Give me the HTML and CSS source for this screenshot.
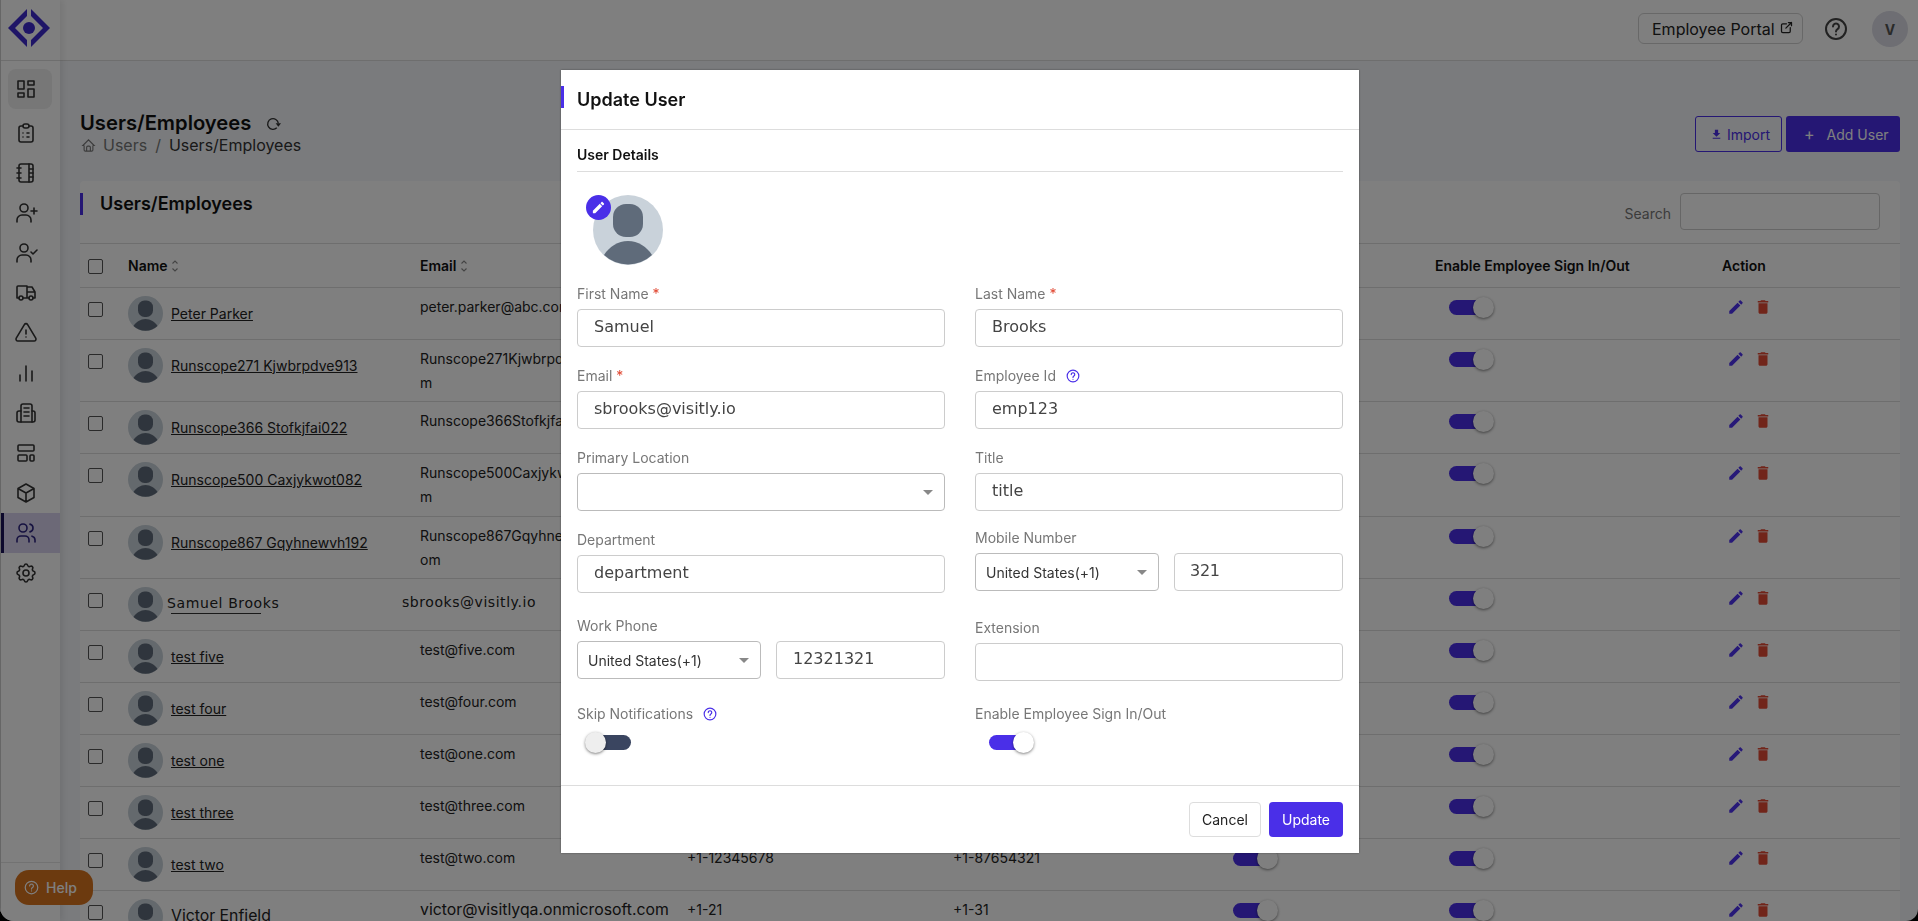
FILE: index.html
```html
<!DOCTYPE html>
<html>
<head>
  <title>Users/Employees</title>
  <link rel="stylesheet" href="styles.css">
</head>
<body>
  <!-- Shared icons -->
  <svg class="icon-defs" xmlns="http://www.w3.org/2000/svg">
    <symbol id="i-avatar" viewBox="0 0 70 70">
      <circle cx="35" cy="35" r="35" fill="#c9d2da"/>
      <rect x="20" y="9" width="30" height="33" rx="13" fill="#5f6b7a"/>
      <path d="M11 60C16 52 25 46 35 46C45 46 54 52 59 60A35 35 0 0 1 11 60Z" fill="#5f6b7a"/>
    </symbol>
    <symbol id="i-edit" viewBox="0 0 24 24">
      <path d="M3 17.25V21h3.75L17.81 9.94l-3.75-3.75L3 17.25zM20.71 7.04c.39-.39.39-1.02 0-1.41l-2.34-2.34c-.39-.39-1.02-.39-1.41 0l-1.83 1.83 3.75 3.75 1.83-1.83z"/>
    </symbol>
    <symbol id="i-trash" viewBox="0 0 24 24">
      <path d="M6 19c0 1.1.9 2 2 2h8c1.1 0 2-.9 2-2V7H6v12zM19 4h-3.5l-1-1h-5l-1 1H5v2h14V4z"/>
    </symbol>
    <symbol id="i-sort" viewBox="0 0 8 14">
      <path d="M1.5 4.5L4 2l2.500 2.500M1.500 9.500L4 12l2.500-2.500" fill="none" stroke="currentColor" stroke-width="1.100"/>
    </symbol>
    <symbol id="i-help" viewBox="0 0 24 24">
      <circle cx="12" cy="12" r="10" fill="none" stroke="currentColor" stroke-width="2"/>
      <path d="M9 9.500a3 3 0 1 1 4.500 2.600c-1 .6-1.500 1.200-1.500 2.400M12 17.500v.01" fill="none" stroke="currentColor" stroke-width="2" stroke-linecap="round"/>
    </symbol>
  </svg>

  <div class="app">
    <aside class="sidebar">
      <div class="logo-box">
        <svg class="logo" viewBox="0 0 42 38" xmlns="http://www.w3.org/2000/svg">
          <path d="M0 19L19 0V7L7 19L19 31V38Z"/>
          <path d="M23 0L42 19L23 38V31L35 19L23 7Z"/>
          <circle cx="21" cy="19" r="6"/>
        </svg>
      </div>
      <nav class="nav">
        <a class="nav-item nav-item-home" href="#">
          <svg class="nav-icon" viewBox="0 0 24 24"><path d="M4 4h6v8h-6zM4 16h6v4h-6zM14 12h6v8h-6zM14 4h6v4h-6z"/></svg>
        </a>
        <a class="nav-item" href="#">
          <svg class="nav-icon" viewBox="0 0 24 24"><path d="M9 5h-2a2 2 0 0 0 -2 2v12a2 2 0 0 0 2 2h10a2 2 0 0 0 2 -2v-12a2 2 0 0 0 -2 -2h-2"/><path d="M9 5a2 2 0 0 1 2 -2h2a2 2 0 0 1 2 2a2 2 0 0 1 -2 2h-2a2 2 0 0 1 -2 -2z"/><path d="M9 12h.01M13 12h2M9 16h.01M13 16h2"/></svg>
        </a>
        <a class="nav-item" href="#">
          <svg class="nav-icon" viewBox="0 0 24 24"><rect x="5" y="3" width="14" height="18" rx="2"/><path d="M15 3v18M3 7h4M3 12h4M3 17h4M15 8h4M15 12h4M15 16h4"/></svg>
        </a>
        <a class="nav-item" href="#">
          <svg class="nav-icon" viewBox="0 0 24 24"><circle cx="10" cy="7" r="4"/><path d="M3 21v-2a5 5 0 0 1 5 -5h4a5 5 0 0 1 5 5v2M20 7v6M17 10h6"/></svg>
        </a>
        <a class="nav-item" href="#">
          <svg class="nav-icon" viewBox="0 0 24 24"><circle cx="10" cy="7" r="4"/><path d="M3 21v-2a5 5 0 0 1 5 -5h4a5 5 0 0 1 5 5v2M17 11l2 2l4 -4"/></svg>
        </a>
        <a class="nav-item" href="#">
          <svg class="nav-icon" viewBox="0 0 24 24"><circle cx="7" cy="17" r="2"/><circle cx="17" cy="17" r="2"/><path d="M5 17h-2v-11a1 1 0 0 1 1 -1h9v12m-4 0h6m4 0h2v-6h-8m0 -5h5l3 5"/></svg>
        </a>
        <a class="nav-item" href="#">
          <svg class="nav-icon" viewBox="0 0 24 24"><path d="M12 9v4M12 16h.01"/><path d="M10.363 3.591l-8.106 13.534a1.914 1.914 0 0 0 1.636 2.871h16.214a1.914 1.914 0 0 0 1.636 -2.87l-8.106 -13.536a1.914 1.914 0 0 0 -3.274 0z"/></svg>
        </a>
        <a class="nav-item" href="#">
          <svg class="nav-icon" viewBox="0 0 24 24"><path d="M6 20v-6M12 20V5M18 20v-10"/></svg>
        </a>
        <a class="nav-item" href="#">
          <svg class="nav-icon" viewBox="0 0 24 24"><path d="M7 10H5a2 2 0 0 0 -2 2v7a2 2 0 0 0 2 2h14a2 2 0 0 0 2 -2v-7a2 2 0 0 0 -2 -2h-1"/><path d="M7 21V5a2 2 0 0 1 2 -2h7a2 2 0 0 1 2 2v16"/><path d="M10 7h5M10 11h5M10 15h5"/></svg>
        </a>
        <a class="nav-item" href="#">
          <svg class="nav-icon" viewBox="0 0 24 24"><rect x="4" y="4" width="16" height="6" rx="1"/><rect x="4" y="14" width="9" height="6" rx="1"/><rect x="16" y="14" width="4" height="6" rx="1"/></svg>
        </a>
        <a class="nav-item" href="#">
          <svg class="nav-icon" viewBox="0 0 24 24"><path d="M12 3l8 4.500v9l-8 4.500l-8 -4.500v-9zM12 12l8 -4.500M12 12v9M12 12l-8 -4.500"/></svg>
        </a>
        <a class="nav-item nav-item-active" href="#">
          <svg class="nav-icon" viewBox="0 0 24 24"><circle cx="9" cy="7" r="4"/><path d="M3 21v-2a4 4 0 0 1 4 -4h4a4 4 0 0 1 4 4v2M16 3.130a4 4 0 0 1 0 7.750M21 21v-2a4 4 0 0 0 -3 -3.850"/></svg>
        </a>
        <a class="nav-item" href="#">
          <svg class="nav-icon" viewBox="0 0 24 24"><path d="M10.325 4.317c.426 -1.756 2.924 -1.756 3.350 0a1.724 1.724 0 0 0 2.573 1.066c1.543 -.94 3.310 .826 2.370 2.370a1.724 1.724 0 0 0 1.065 2.572c1.756 .426 1.756 2.924 0 3.350a1.724 1.724 0 0 0 -1.066 2.573c.94 1.543 -.826 3.310 -2.370 2.370a1.724 1.724 0 0 0 -2.572 1.065c-.426 1.756 -2.924 1.756 -3.350 0a1.724 1.724 0 0 0 -2.573 -1.066c-1.543 .94 -3.310 -.826 -2.370 -2.370a1.724 1.724 0 0 0 -1.065 -2.572c-1.756 -.426 -1.756 -2.924 0 -3.350a1.724 1.724 0 0 0 1.066 -2.573c-.94 -1.543 .826 -3.310 2.370 -2.370c1 .608 2.296 .07 2.572 -1.065z"/><circle cx="12" cy="12" r="3"/></svg>
        </a>
      </nav>
      <div class="sidebar-foot"></div>
    </aside>

    <div class="main">
      <header class="topbar">
        <a class="portal-button" href="#">
          Employee Portal
          <svg class="portal-icon" viewBox="0 0 24 24"><path d="M12 6H6a2 2 0 0 0 -2 2v10a2 2 0 0 0 2 2h10a2 2 0 0 0 2 -2v-6M11 13l9 -9M15 4h5v5"/></svg>
        </a>
        <svg class="top-help"><use href="#i-help"/></svg>
        <div class="user-badge">V</div>
      </header>

      <div class="content">
        <div class="page-head">
          <div>
            <h1 class="page-title">
              Users/Employees
              <svg class="refresh-icon" viewBox="0 0 24 24"><path d="M20 11a8 8 0 1 0 -2.300 6.700"/><path d="M16 11h8l-4 5z" class="refresh-tip"/></svg>
            </h1>
            <div class="breadcrumb">
              <svg class="home-icon" viewBox="0 0 24 24"><path d="M5 12H3l9 -9l9 9h-2M5 12v7a2 2 0 0 0 2 2h10a2 2 0 0 0 2 -2v-7M9 21v-6a2 2 0 0 1 2 -2h2a2 2 0 0 1 2 2v6"/></svg>
              <span class="crumb-muted">Users</span>
              <span class="crumb-sep">/</span>
              <span>Users/Employees</span>
            </div>
          </div>
          <div class="page-actions">
            <button class="button button-outline">
              <svg class="button-icon" viewBox="0 0 24 24"><path d="M5 20h14v-2H5v2zM19 9h-4V3H9v6H5l7 7 7-7z"/></svg>
              Import
            </button>
            <button class="button button-solid">
              <span class="plus">+</span>
              Add User
            </button>
          </div>
        </div>

        <section class="card">
          <div class="card-head">
            <h2 class="card-title">Users/Employees</h2>
            <label class="search">
              <span class="search-label">Search</span>
              <input class="search-input" type="text">
            </label>
          </div>

          <table class="users">
            <colgroup>
              <col class="col-check"><col class="col-name"><col class="col-email"><col class="col-phone"><col class="col-phone">
              <col class="col-skip"><col class="col-sign"><col class="col-action">
            </colgroup>
            <thead>
              <tr>
                <th class="cell-check"><input class="check check-head" type="checkbox"></th>
                <th>Name <svg class="sort"><use href="#i-sort"/></svg></th>
                <th>Email <svg class="sort"><use href="#i-sort"/></svg></th>
                <th></th>
                <th></th>
                <th></th>
                <th>Enable Employee Sign In/Out</th>
                <th>Action</th>
              </tr>
            </thead>
            <tbody>
              <tr>
                <td class="cell-check"><input class="check" type="checkbox"></td>
                <td><div class="user"><svg class="avatar"><use href="#i-avatar"/></svg><a class="user-link" href="#">Peter Parker</a></div></td>
                <td class="cell-text">peter.parker@abc.com</td>
                <td class="cell-text"></td>
                <td class="cell-text"></td>
                <td><div class="toggle"><span class="track"></span><span class="thumb"></span></div></td>
                <td><div class="toggle"><span class="track"></span><span class="thumb"></span></div></td>
                <td><div class="actions"><svg class="act act-edit"><use href="#i-edit"/></svg><svg class="act act-del"><use href="#i-trash"/></svg></div></td>
              </tr>
              <tr class="row-tall">
                <td class="cell-check"><input class="check" type="checkbox"></td>
                <td><div class="user"><svg class="avatar"><use href="#i-avatar"/></svg><a class="user-link" href="#">Runscope271 Kjwbrpdve913</a></div></td>
                <td class="cell-text">Runscope271Kjwbrpdve913@abc.co<br>m</td>
                <td class="cell-text"></td>
                <td class="cell-text"></td>
                <td><div class="toggle"><span class="track"></span><span class="thumb"></span></div></td>
                <td><div class="toggle"><span class="track"></span><span class="thumb"></span></div></td>
                <td><div class="actions"><svg class="act act-edit"><use href="#i-edit"/></svg><svg class="act act-del"><use href="#i-trash"/></svg></div></td>
              </tr>
              <tr>
                <td class="cell-check"><input class="check" type="checkbox"></td>
                <td><div class="user"><svg class="avatar"><use href="#i-avatar"/></svg><a class="user-link" href="#">Runscope366 Stofkjfai022</a></div></td>
                <td class="cell-text">Runscope366Stofkjfai022@abc.com</td>
                <td class="cell-text"></td>
                <td class="cell-text"></td>
                <td><div class="toggle"><span class="track"></span><span class="thumb"></span></div></td>
                <td><div class="toggle"><span class="track"></span><span class="thumb"></span></div></td>
                <td><div class="actions"><svg class="act act-edit"><use href="#i-edit"/></svg><svg class="act act-del"><use href="#i-trash"/></svg></div></td>
              </tr>
              <tr class="row-taller">
                <td class="cell-check"><input class="check" type="checkbox"></td>
                <td><div class="user"><svg class="avatar"><use href="#i-avatar"/></svg><a class="user-link" href="#">Runscope500 Caxjykwot082</a></div></td>
                <td class="cell-text">Runscope500Caxjykwot082@abc.co<br>m</td>
                <td class="cell-text"></td>
                <td class="cell-text"></td>
                <td><div class="toggle"><span class="track"></span><span class="thumb"></span></div></td>
                <td><div class="toggle"><span class="track"></span><span class="thumb"></span></div></td>
                <td><div class="actions"><svg class="act act-edit"><use href="#i-edit"/></svg><svg class="act act-del"><use href="#i-trash"/></svg></div></td>
              </tr>
              <tr class="row-tall">
                <td class="cell-check"><input class="check" type="checkbox"></td>
                <td><div class="user"><svg class="avatar"><use href="#i-avatar"/></svg><a class="user-link" href="#">Runscope867 Gqyhnewvh192</a></div></td>
                <td class="cell-text">Runscope867Gqyhnewvh192@abc.c<br>om</td>
                <td class="cell-text"></td>
                <td class="cell-text"></td>
                <td><div class="toggle"><span class="track"></span><span class="thumb"></span></div></td>
                <td><div class="toggle"><span class="track"></span><span class="thumb"></span></div></td>
                <td><div class="actions"><svg class="act act-edit"><use href="#i-edit"/></svg><svg class="act act-del"><use href="#i-trash"/></svg></div></td>
              </tr>
              <tr>
                <td class="cell-check"><input class="check" type="checkbox"></td>
                <td><div class="user"><svg class="avatar"><use href="#i-avatar"/></svg><a class="user-link user-link-wide" href="#"><span>Samuel Brooks</span></a></div></td>
                <td class="cell-text cell-wide">sbrooks@visitly.io</td>
                <td class="cell-text"></td>
                <td class="cell-text"></td>
                <td><div class="toggle"><span class="track"></span><span class="thumb"></span></div></td>
                <td><div class="toggle"><span class="track"></span><span class="thumb"></span></div></td>
                <td><div class="actions"><svg class="act act-edit"><use href="#i-edit"/></svg><svg class="act act-del"><use href="#i-trash"/></svg></div></td>
              </tr>
              <tr>
                <td class="cell-check"><input class="check" type="checkbox"></td>
                <td><div class="user"><svg class="avatar"><use href="#i-avatar"/></svg><a class="user-link" href="#">test five</a></div></td>
                <td class="cell-text">test@five.com</td>
                <td class="cell-text"></td>
                <td class="cell-text"></td>
                <td><div class="toggle"><span class="track"></span><span class="thumb"></span></div></td>
                <td><div class="toggle"><span class="track"></span><span class="thumb"></span></div></td>
                <td><div class="actions"><svg class="act act-edit"><use href="#i-edit"/></svg><svg class="act act-del"><use href="#i-trash"/></svg></div></td>
              </tr>
              <tr>
                <td class="cell-check"><input class="check" type="checkbox"></td>
                <td><div class="user"><svg class="avatar"><use href="#i-avatar"/></svg><a class="user-link" href="#">test four</a></div></td>
                <td class="cell-text">test@four.com</td>
                <td class="cell-text"></td>
                <td class="cell-text"></td>
                <td><div class="toggle"><span class="track"></span><span class="thumb"></span></div></td>
                <td><div class="toggle"><span class="track"></span><span class="thumb"></span></div></td>
                <td><div class="actions"><svg class="act act-edit"><use href="#i-edit"/></svg><svg class="act act-del"><use href="#i-trash"/></svg></div></td>
              </tr>
              <tr>
                <td class="cell-check"><input class="check" type="checkbox"></td>
                <td><div class="user"><svg class="avatar"><use href="#i-avatar"/></svg><a class="user-link" href="#">test one</a></div></td>
                <td class="cell-text">test@one.com</td>
                <td class="cell-text"></td>
                <td class="cell-text"></td>
                <td><div class="toggle"><span class="track"></span><span class="thumb"></span></div></td>
                <td><div class="toggle"><span class="track"></span><span class="thumb"></span></div></td>
                <td><div class="actions"><svg class="act act-edit"><use href="#i-edit"/></svg><svg class="act act-del"><use href="#i-trash"/></svg></div></td>
              </tr>
              <tr>
                <td class="cell-check"><input class="check" type="checkbox"></td>
                <td><div class="user"><svg class="avatar"><use href="#i-avatar"/></svg><a class="user-link" href="#">test three</a></div></td>
                <td class="cell-text">test@three.com</td>
                <td class="cell-text"></td>
                <td class="cell-text"></td>
                <td><div class="toggle"><span class="track"></span><span class="thumb"></span></div></td>
                <td><div class="toggle"><span class="track"></span><span class="thumb"></span></div></td>
                <td><div class="actions"><svg class="act act-edit"><use href="#i-edit"/></svg><svg class="act act-del"><use href="#i-trash"/></svg></div></td>
              </tr>
              <tr>
                <td class="cell-check"><input class="check" type="checkbox"></td>
                <td><div class="user"><svg class="avatar"><use href="#i-avatar"/></svg><a class="user-link" href="#">test two</a></div></td>
                <td class="cell-text">test@two.com</td>
                <td class="cell-text">+1-12345678</td>
                <td class="cell-text">+1-87654321</td>
                <td><div class="toggle"><span class="track"></span><span class="thumb"></span></div></td>
                <td><div class="toggle"><span class="track"></span><span class="thumb"></span></div></td>
                <td><div class="actions"><svg class="act act-edit"><use href="#i-edit"/></svg><svg class="act act-del"><use href="#i-trash"/></svg></div></td>
              </tr>
              <tr>
                <td class="cell-check"><input class="check" type="checkbox"></td>
                <td><div class="user"><svg class="avatar"><use href="#i-avatar"/></svg><a class="user-link user-link-big" href="#">Victor Enfield</a></div></td>
                <td class="cell-text cell-big">victor@visitlyqa.onmicrosoft.com</td>
                <td class="cell-text">+1-21</td>
                <td class="cell-text">+1-31</td>
                <td><div class="toggle"><span class="track"></span><span class="thumb"></span></div></td>
                <td><div class="toggle"><span class="track"></span><span class="thumb"></span></div></td>
                <td><div class="actions"><svg class="act act-edit"><use href="#i-edit"/></svg><svg class="act act-del"><use href="#i-trash"/></svg></div></td>
              </tr>
            </tbody>
          </table>
        </section>
      </div>
    </div>

    <a class="help-button" href="#">
      <svg class="help-button-icon"><use href="#i-help"/></svg>
      Help
    </a>
  </div>

  <!-- Update User dialog -->
  <div class="overlay">
    <div class="modal">
      <div class="modal-head">
        <h2 class="modal-title">Update User</h2>
      </div>

      <div class="modal-body">
        <div class="section-title">User Details</div>

        <div class="photo">
          <svg class="photo-image"><use href="#i-avatar"/></svg>
          <span class="photo-edit"><svg class="photo-edit-icon"><use href="#i-edit"/></svg></span>
        </div>

        <div class="form">
          <div class="form-col">
            <div class="field">
              <label class="field-label">First Name <span class="required">*</span></label>
              <input class="input" type="text" value="Samuel">
            </div>
            <div class="field">
              <label class="field-label">Email <span class="required">*</span></label>
              <input class="input" type="text" value="sbrooks@visitly.io">
            </div>
            <div class="field">
              <label class="field-label">Primary Location</label>
              <div class="select"><span></span><i class="caret"></i></div>
            </div>
            <div class="field gap-23">
              <label class="field-label">Department</label>
              <input class="input" type="text" value="department">
            </div>
            <div class="field gap-25">
              <label class="field-label">Work Phone</label>
              <div class="phone">
                <div class="select select-country"><span>United States(+1)</span><i class="caret"></i></div>
                <input class="input input-phone" type="text" value="12321321">
              </div>
            </div>
            <div class="field">
              <label class="field-label">Skip Notifications <svg class="field-help"><use href="#i-help"/></svg></label>
              <div class="toggle toggle-form toggle-off"><span class="track"></span><span class="thumb"></span></div>
            </div>
          </div>

          <div class="form-col">
            <div class="field">
              <label class="field-label">Last Name <span class="required">*</span></label>
              <input class="input" type="text" value="Brooks">
            </div>
            <div class="field">
              <label class="field-label">Employee Id <svg class="field-help"><use href="#i-help"/></svg></label>
              <input class="input" type="text" value="emp123">
            </div>
            <div class="field gap-17">
              <label class="field-label">Title</label>
              <input class="input" type="text" value="title">
            </div>
            <div class="field gap-27">
              <label class="field-label">Mobile Number</label>
              <div class="phone">
                <div class="select select-country"><span>United States(+1)</span><i class="caret"></i></div>
                <input class="input input-phone input-short" type="text" value="321">
              </div>
            </div>
            <div class="field gap-23">
              <label class="field-label">Extension</label>
              <input class="input" type="text">
            </div>
            <div class="field">
              <label class="field-label">Enable Employee Sign In/Out</label>
              <div class="toggle toggle-form toggle-on"><span class="track"></span><span class="thumb"></span></div>
            </div>
          </div>
        </div>
      </div>

      <div class="modal-foot">
        <button class="modal-btn modal-btn-cancel">Cancel</button>
        <button class="modal-btn modal-btn-update">Update</button>
      </div>
    </div>
  </div>
</body>
</html>
```

FILE: styles.css
```css
* {
  box-sizing: border-box;
}

body {
  margin: 0;
  height: 100vh;
  overflow: hidden;
  background-color: #000;
  font-family: "Inter", "Liberation Sans", sans-serif;
  font-size: 14px;
  color: #222;
}

.icon-defs {
  display: none;
}

.app {
  display: flex;
  height: 100%;
  position: relative;
  overflow: hidden;
  background-color: #f4f6fa;
  border-radius: 0 0 12px 14px;
}

/* Sidebar */
.sidebar {
  width: 60px;
  flex-shrink: 0;
  display: flex;
  flex-direction: column;
  background-color: #fff;
  border-left: 1px solid #ccc;
  box-shadow: 3px 0 6px rgba(0, 0, 0, 0.08);
  z-index: 2;
}

.logo-box {
  height: 61px;
  padding: 9px 0 0 7px;
  border-bottom: 1px solid #ddd;
}

.logo {
  display: block;
  width: 42px;
  height: 38px;
  fill: #3f2bcf;
}

.nav {
  display: flex;
  flex-direction: column;
  margin-top: 8px;
}

.nav-item {
  height: 40px;
  display: flex;
  align-items: center;
  padding-left: 13px;
  color: #333;
}

.nav-item-home {
  margin: 0 8px 4px 7px;
  padding-left: 6px;
  background-color: #eee;
  border-radius: 8px;
}

.nav-item-active {
  padding-left: 10px;
  color: #2c2480;
  background-color: #d8d2ee;
  border-left: 3px solid #1a1258;
}

.nav-icon {
  width: 24px;
  height: 24px;
  fill: none;
  stroke: currentColor;
  stroke-width: 1.6;
  stroke-linecap: round;
  stroke-linejoin: round;
}

.sidebar-foot {
  margin-top: auto;
  height: 59px;
  border-top: 1px solid #e5e5e5;
}

.help-button {
  position: absolute;
  left: 15px;
  bottom: 16px;
  width: 78px;
  height: 35px;
  display: flex;
  align-items: center;
  gap: 7px;
  padding-left: 9px;
  background-color: #d9741f;
  border-radius: 14px;
  color: #fff;
  font-size: 14px;
  font-weight: 500;
  text-decoration: none;
  z-index: 3;
}

.help-button-icon {
  width: 15px;
  height: 15px;
}

/* Main column */
.main {
  flex: 1;
  min-width: 0;
  display: flex;
  flex-direction: column;
}

.topbar {
  height: 61px;
  flex-shrink: 0;
  display: flex;
  align-items: flex-start;
  padding: 13px 10px 0 0;
  background-color: #fff;
  border-bottom: 1px solid #ddd;
  justify-content: flex-end;
}

.portal-button {
  width: 165px;
  height: 31px;
  display: flex;
  align-items: center;
  padding-left: 13px;
  border: 1px solid #d0d0d0;
  border-radius: 6px;
  font-size: 16px;
  color: #222;
  text-decoration: none;
}

.portal-icon {
  width: 15px;
  height: 15px;
  margin-left: 4px;
  margin-top: -3px;
  fill: none;
  stroke: #222;
  stroke-width: 2;
  stroke-linecap: round;
  stroke-linejoin: round;
}

.top-help {
  width: 24px;
  height: 24px;
  margin: 4px 24px 0 21px;
  color: #444;
}

.user-badge {
  width: 36px;
  height: 36px;
  margin-top: -2px;
  display: flex;
  align-items: center;
  justify-content: center;
  border-radius: 50%;
  background-color: #dcdce6;
  font-weight: 700;
  color: #555;
}

.content {
  flex: 1;
  padding: 49px 18px 0 20px;
  min-height: 0;
}

.page-head {
  display: flex;
  justify-content: space-between;
  height: 71px;
}

.page-title {
  display: flex;
  align-items: center;
  height: 24px;
  margin: 0;
  font-size: 20.2px;
  font-weight: 600;
  color: #111;
}

.refresh-icon {
  width: 16px;
  height: 16px;
  margin-left: 14px;
  margin-top: 3px;
  fill: none;
  stroke: #333;
  stroke-width: 2;
}

.refresh-tip {
  fill: #333;
  stroke: none;
}

.breadcrumb {
  display: flex;
  align-items: center;
  height: 24px;
  margin-top: -1px;
  font-size: 16px;
  color: #333;
}

.home-icon {
  width: 15px;
  height: 15px;
  margin: 0 7px 0 1px;
  fill: none;
  stroke: #777;
  stroke-width: 1.800;
}

.crumb-muted {
  color: #777;
}

.crumb-sep {
  margin: 0 8px;
  color: #777;
}

.page-actions {
  display: flex;
  gap: 4px;
  margin-top: 6px;
}

.button {
  height: 36px;
  display: flex;
  align-items: center;
  border-radius: 3px;
  font-family: inherit;
  font-size: 14px;
  cursor: pointer;
}

.button-outline {
  width: 87px;
  padding: 0 0 0 14px;
  gap: 4px;
  background-color: transparent;
  border: 1px solid #4a2fe8;
  color: #4a2fe8;
}

.button-icon {
  width: 13px;
  height: 13px;
  fill: #4a2fe8;
}

.button-solid {
  width: 114px;
  padding: 0 0 0 18px;
  background-color: #4a2fe8;
  border: none;
  color: #fff;
}

.plus {
  font-size: 16px;
  margin-right: 12px;
}

/* Users table card */
.card {
  background-color: #fff;
  border-radius: 4px 4px 0 0;
}

.card-head {
  height: 63px;
  display: flex;
  justify-content: space-between;
  align-items: flex-start;
  padding: 12px 20px 0 0;
  border-bottom: 1px solid #ddd;
}

.card-title {
  height: 22px;
  margin: 0;
  padding-left: 17px;
  border-left: 3px solid #4a2fe8;
  font-size: 18px;
  line-height: 22px;
  font-weight: 600;
  color: #111;
}

.search {
  display: flex;
  align-items: center;
  gap: 9px;
  color: #777;
}

.search-label {
  margin: 3px 0 0 1px;
}

.search-input {
  width: 200px;
  height: 37px;
  border: 1px solid #ccc;
  border-radius: 4px;
  background-color: transparent;
}

.users {
  width: 100%;
  table-layout: fixed;
  border-collapse: separate;
  border-spacing: 0;
}

.col-check { width: 48px; }
.col-name { width: 292px; }
.col-email { width: 267px; }
.col-phone { width: 266px; }
.col-skip { width: 216px; }
.col-sign { width: 287px; }
.col-action { width: 178px; }

.users th {
  height: 44px;
  padding: 0;
  text-align: left;
  font-weight: 600;
  color: #111;
  border-bottom: 1px solid #ddd;
}

.users td {
  height: 52px;
  padding: 0;
  vertical-align: top;
  border-bottom: 1px solid #ddd;
}

.users tr.row-tall td {
  height: 62px;
}

.users tr.row-taller td {
  height: 63px;
}

.users th.cell-check,
.users td.cell-check {
  padding-left: 8px;
}

.check {
  appearance: none;
  display: block;
  width: 15px;
  height: 15px;
  margin: 14px 0 0;
  background-color: #fff;
  border: 1px solid #555;
  border-radius: 2px;
}

.check-head {
  margin-top: 2px;
}

.sort {
  width: 8px;
  height: 14px;
  vertical-align: -2px;
  color: #888;
}

.user {
  display: flex;
  align-items: center;
  gap: 8px;
  padding-top: 8px;
}

.avatar {
  width: 35px;
  height: 35px;
  flex-shrink: 0;
}

.user-link {
  color: #222;
  line-height: 24px;
}

.user-link-big {
  font-size: 15.8px;
  margin-top: -2px;
}

.user-link-wide {
  display: block;
  width: 90px;
  height: 21px;
  margin-top: -3px;
  white-space: nowrap;
  text-decoration: none;
  border-bottom: 1px solid #333;
  font-family: "DejaVu Sans", sans-serif;
  letter-spacing: 0.6px;
}

.user-link-wide span {
  margin-left: -4px;
  display: block;
  line-height: 21px;
}

.users td.cell-text {
  padding-top: 7px;
  line-height: 24px;
  color: #222;
}

.users td.cell-wide {
  padding-top: 11px;
  font-family: "DejaVu Sans", sans-serif;
  letter-spacing: 0.55px;
  text-indent: -18px;
}

.users td.cell-big {
  font-size: 15.8px;
}

/* Switch */
.toggle {
  position: relative;
  width: 45px;
  height: 21px;
  margin: 9px 0 0 14px;
}

.track {
  position: absolute;
  top: 3px;
  left: 0;
  width: 40px;
  height: 15px;
  border-radius: 8px;
  background-color: #4a2fe8;
}

.thumb {
  position: absolute;
  top: 0;
  left: 24px;
  width: 21px;
  height: 21px;
  border-radius: 50%;
  background-color: #fff;
  box-shadow: 0 1px 3px rgba(0, 0, 0, 0.5);
}

.toggle-form {
  margin: 8px 0 0;
}

.toggle-off {
  width: 46px;
  margin-left: 8px;
}

.toggle-off .track {
  left: 6px;
  background-color: #3a4560;
}

.toggle-off .thumb {
  left: 0;
  background-color: #eee;
}

.toggle-on {
  margin-left: 14px;
}

.actions {
  display: flex;
  gap: 9px;
  padding: 10px 0 0 5px;
}

.act {
  width: 18px;
  height: 18px;
}

.act-edit {
  fill: #4f33f0;
}

.act-del {
  fill: #e24a35;
}

/* Dialog */
.overlay {
  position: fixed;
  inset: 0;
  display: flex;
  justify-content: center;
  align-items: flex-start;
  padding: 70px 0 0 2px;
  background-color: rgba(0, 0, 0, 0.5);
  backdrop-filter: blur(0.5px);
  z-index: 10;
}

.modal {
  width: 798px;
  height: 783px;
  display: flex;
  flex-direction: column;
  background-color: #fff;
  box-shadow: 0 0 2px rgba(0, 0, 0, 0.4);
}

.modal-head {
  height: 60px;
  flex-shrink: 0;
  padding-top: 16px;
  border-bottom: 1px solid #ddd;
}

.modal-title {
  height: 22px;
  margin: 0;
  padding-left: 13px;
  border-left: 3px solid #4a2fe8;
  font-size: 18px;
  line-height: 28px;
  font-weight: 600;
  color: #111;
}

.modal-body {
  flex: 1;
  padding: 0 16px;
}

.section-title {
  height: 42px;
  padding-top: 15px;
  line-height: 20px;
  font-weight: 600;
  color: #111;
  border-bottom: 1px solid #ddd;
}

.photo {
  position: relative;
  width: 70px;
  height: 70px;
  margin: 23px 0 19px 16px;
}

.photo-image {
  display: block;
  width: 70px;
  height: 70px;
}

.photo-edit {
  position: absolute;
  left: -7px;
  top: 0;
  width: 25px;
  height: 25px;
  display: flex;
  align-items: center;
  justify-content: center;
  border-radius: 50%;
  background-color: #4a2fe8;
}

.photo-edit-icon {
  width: 15px;
  height: 15px;
  fill: #fff;
}

.form {
  display: grid;
  grid-template-columns: 368px 368px;
  column-gap: 30px;
}

.field {
  margin-bottom: 19px;
}

.field.gap-17 { margin-bottom: 17px; }
.field.gap-23 { margin-bottom: 23px; }
.field.gap-25 { margin-bottom: 25px; }
.field.gap-27 { margin-bottom: 27px; }

.field-label {
  display: block;
  height: 20px;
  margin-bottom: 5px;
  line-height: 20px;
  color: #777;
}

.required {
  color: #e0452f;
}

.field-help {
  width: 14px;
  height: 14px;
  margin-left: 6px;
  vertical-align: -2px;
  color: #4a2fe8;
}

.input {
  width: 100%;
  height: 38px;
  padding: 0 8px 3px 16px;
  background-color: #fff;
  border: 1px solid #ccc;
  border-radius: 4px;
  font-family: "DejaVu Sans", sans-serif;
  font-size: 16px;
  color: #444;
}

.input-short {
  padding-left: 15px;
  letter-spacing: -0.3px;
}

.select {
  height: 38px;
  display: flex;
  align-items: center;
  justify-content: space-between;
  padding: 0 11px 0 10px;
  background-color: #fff;
  border: 1px solid #bbb;
  border-radius: 4px;
  color: #333;
}

.caret {
  width: 0;
  height: 0;
  border-left: 5px solid transparent;
  border-right: 5px solid transparent;
  border-top: 5px solid #888;
}

.phone {
  display: flex;
  gap: 15px;
}

.select-country {
  width: 184px;
  flex-shrink: 0;
}

.input-phone {
  flex: 1;
  min-width: 0;
}

.modal-foot {
  height: 68px;
  flex-shrink: 0;
  display: flex;
  justify-content: flex-end;
  align-items: center;
  gap: 8px;
  padding: 0 16px;
  border-top: 1px solid #ddd;
}

.modal-btn {
  height: 35px;
  border-radius: 4px;
  font-family: inherit;
  font-size: 14px;
  cursor: pointer;
}

.modal-btn-cancel {
  width: 72px;
  background-color: #fff;
  border: 1px solid #ddd;
  color: #222;
}

.modal-btn-update {
  width: 74px;
  background-color: #4a2fe8;
  border: none;
  color: #fff;
}
```
